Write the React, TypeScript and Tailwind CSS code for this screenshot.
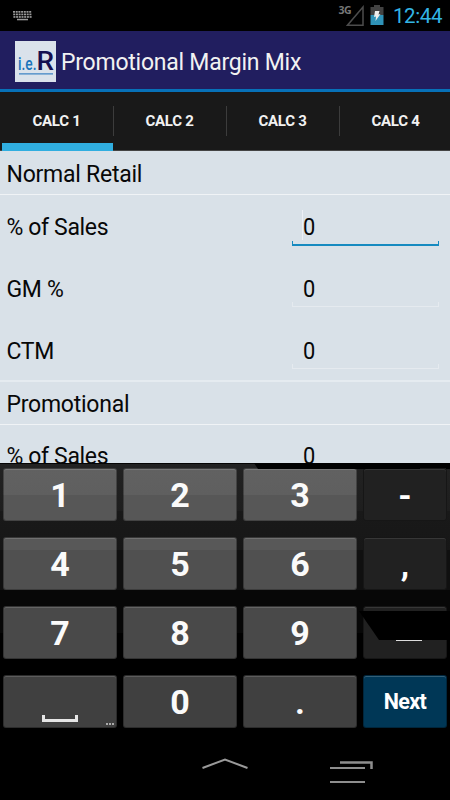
import { clsx } from 'clsx';

const tabs = ['CALC 1', 'CALC 2', 'CALC 3', 'CALC 4'];

const keyRows = [
  { keys: ['1', '2', '3'], side: '-', tone: 'bg-[linear-gradient(#616161_0,#5f5f5f_26px,#575757_26px,#575757_100%)]' },
  { keys: ['4', '5', '6'], side: ',', tone: 'bg-[linear-gradient(#585858_0,#585858_12px,#505050_12px,#505050_100%)]' },
  { keys: ['7', '8', '9'], side: '_', tone: 'bg-[#494949]' },
  { keys: [' ', '0', '.'], side: 'Next', tone: 'bg-[#404040]' },
];

function StatusBar() {
  return (
    <div className="flex h-[31px] items-start bg-black">
      <svg className="ml-[13px] mt-[11px]" width="20" height="10" viewBox="0 0 20 10" fill="#9a9a9a">
        {[0, 3, 6].map((y, r) =>
          [0, 1, 2, 3, 4, 5, 6].map((c) => (
            <rect key={`${y}-${c}`} x={c * 2.7 + r * 0.2} y={y * 0.85} width="2" height="1.7" />
          ))
        )}
        <rect x="4" y="7.8" width="11" height="1.5" />
      </svg>
      <div className="ml-auto mt-[5px] font-['Open_Sans'] text-[10.5px] font-bold leading-[11px] tracking-[-0.6px] text-[#777]">3G</div>
      <svg className="ml-[-5px] mt-[5px]" width="18" height="22" viewBox="0 0 18 22" fill="none">
        <path d="M17 2V20.2H1.5Z" stroke="#4c4c4c" strokeWidth="1.5" />
      </svg>
      <svg className="ml-[6px] mt-[5px]" width="14" height="21" viewBox="0 0 14 21">
        <path d="M4 0H10V2H13.5V10H.5V2H4Z" fill="#424242" />
        <path d="M.5 10H13.5V20H.5Z" fill="#2f93b8" />
        <path d="M5 6H9.5L8.5 9.5L10.5 9L5.5 16L6 11.5L4 12Z" fill="#eee" />
      </svg>
      <div className="ml-[9px] mr-[7px] mt-[4px] w-[50px] whitespace-nowrap text-[20.5px] leading-[24px] tracking-[-0.4px] text-[#33b5e5]">12:44</div>
    </div>
  );
}

function Header() {
  return (
    <div className="flex h-[61px] items-center border-b-[3px] border-[#0771b8] bg-[#211e5f]">
      <div className="ml-[15px] mt-[2px] h-[41px] w-[41px] overflow-hidden bg-[#dae2eb]">
        <svg width="41" height="41" viewBox="0 0 41 41" fontFamily="Roboto, sans-serif">
          <text y="28.5" fontWeight="500">
            <tspan x="3" fontSize="18" fill="#1b75bb" textLength="18.5" lengthAdjust="spacingAndGlyphs">i.e.</tspan>
            <tspan x="21.5" fontSize="25" fill="#151050" textLength="17.5" lengthAdjust="spacingAndGlyphs">R</tspan>
          </text>
          <path d="M4 32.8H38" stroke="#3c83c4" strokeWidth="1.2" />
        </svg>
      </div>
      <h1 className="ml-[5px] mt-[5px] whitespace-nowrap text-[23px] leading-[28px] tracking-[-0.24px] text-[#f2f2f2]">Promotional Margin Mix</h1>
    </div>
  );
}

function Tabs() {
  return (
    <div className="flex h-[59px] border-b border-[#444] bg-[#191919]">
      {tabs.map((tab, i) => (
        <div key={tab} className="relative flex w-[113px] shrink-0 items-center justify-center text-[15px] font-bold tracking-[-0.25px] text-[#f2f2f2]">
          <span className="mt-px">{tab}</span>
          {i < 3 && <span className="absolute right-[-1px] top-[14px] h-[30px] w-px bg-[#3c3c3c]" />}
          {i === 0 && <span className="absolute bottom-[-1px] left-[2px] right-0 h-[8px] bg-[#30aee0]" />}
        </div>
      ))}
    </div>
  );
}

function Section({ title }: { title: string }) {
  return (
    <div className="flex h-[44px] items-center border-b border-[#f0f3f6] pl-[6.5px] pt-[6px] text-[23px] tracking-[-0.25px]">{title}</div>
  );
}

function Field({ label, focused }: { label: string; focused?: boolean }) {
  return (
    <div className="flex h-[62px] shrink-0 items-center pl-[6.5px] text-[23px] tracking-[-0.35px]">
      <span className="w-[285.5px] pt-[4px]">{label}</span>
      <div className="relative mt-[4px] h-[42px] w-[147px] pl-[11px] pt-[5px] leading-[32px]">
        <span className="inline-block origin-left scale-x-95">0</span>
        {focused && <span className="absolute left-[10px] top-[3px] h-[30px] w-px bg-[#edf0f6]" />}
        <span
          className={clsx(
            'absolute left-0 right-0 h-[5px] border-x',
            focused ? 'bottom-[3px] border-b-2 border-[#168ac0]' : 'bottom-[4px] border-b border-[#e5eaef]'
          )}
        />
      </div>
    </div>
  );
}

function Key({ value, tone }: { value: string; tone: string }) {
  return (
    <div
      className={clsx(
        'relative flex items-center justify-center rounded-[3px] border border-black/30 pt-px text-[34px] font-bold leading-none text-[#fafafa] shadow-[inset_0_1px_0_rgba(255,255,255,0.15)]',
        tone
      )}
    >
      {value === ' ' ? (
        <>
          <span className="absolute bottom-[5px] left-[38px] h-[7px] w-[36px] border-x-[3px] border-b-[3px] border-[#e6e6e6]" />
          <span className="absolute bottom-[2px] right-[2px] flex gap-px">
            <i className="h-[2px] w-[2px] bg-[#aaa]" />
            <i className="h-[2px] w-[2px] bg-[#aaa]" />
            <i className="h-[2px] w-[2px] bg-[#aaa]" />
          </span>
        </>
      ) : (
        <span>{value}</span>
      )}
    </div>
  );
}

function SideKey({ value }: { value: string }) {
  if (value === 'Next') {
    return (
      <div className="flex items-center justify-center rounded-[3px] border border-black/30 bg-[#003756] pt-px text-[21.5px] font-bold tracking-[-0.6px] text-white shadow-[inset_0_1px_0_rgba(255,255,255,0.2)]">
        Next
      </div>
    );
  }
  return (
    <div className="relative flex items-center justify-center rounded-[3px] border border-[#161616] bg-[#212121] pt-px text-[34px] font-bold leading-none text-white shadow-[inset_0_1px_0_rgba(255,255,255,0.1)]">
      {value === '_' ? (
        <>
          <span className="absolute left-[32px] top-[33px] h-px w-[26px] bg-[#ddd]" />
          <svg className="absolute left-[-5px] top-[4px]" width="92" height="29" viewBox="0 0 92 29">
            <path d="M0 0H92V29H20Z" fill="#000" />
          </svg>
        </>
      ) : (
        <span>{value}</span>
      )}
    </div>
  );
}

function Keyboard() {
  return (
    <div className="relative h-[272px] bg-[linear-gradient(#222_0,#1e1e1e_48px,#191919_48px,#171717_87px,#101010_87px,#101010_127px,#070707_127px,#070707_170px,#000_170px)] pl-[3px] pt-[5px]">
      <div className="grid grid-cols-[114px_114px_114px_84px] grid-rows-[53px_53px_53px_53px] gap-x-[6px] gap-y-[16px]">
        {keyRows.map((row) => [
          ...row.keys.map((k) => <Key key={k} value={k} tone={row.tone} />),
          <SideKey key={row.side} value={row.side} />,
        ])}
      </div>
      <svg className="absolute left-0 top-0" width="450" height="7" viewBox="0 0 450 7">
        <path d="M0 0H450V1H0Z" fill="#050505" />
        <path d="M254 0H450V6H446V5H420V6H258Z" fill="#000" />
      </svg>
    </div>
  );
}

function NavBar() {
  return (
    <div className="flex h-[65px] items-start bg-black">
      <svg className="ml-[200px] mt-[20px]" width="50" height="16" viewBox="0 0 50 16" fill="none">
        <path d="M2.5 13L25 4.5L47.5 13" stroke="#9a9a9a" strokeWidth="2" />
      </svg>
      <svg className="ml-[79px] mt-[23px]" width="46" height="26" viewBox="0 0 46 26" fill="none" stroke="#8e8e8e">
        <path d="M11 4.5H42.5V11" strokeWidth="2.5" />
        <path d="M1 10H36" strokeWidth="1.8" />
        <path d="M1 24H36" strokeWidth="1.8" />
      </svg>
    </div>
  );
}

export default function App() {
  return (
    <div className="flex h-[800px] w-[450px] flex-col overflow-hidden bg-black font-[Roboto,sans-serif]">
      <StatusBar />
      <Header />
      <Tabs />
      <div className="h-[312px] overflow-hidden bg-[#d9e1e8] text-[#080808]">
        <Section title="Normal Retail" />
        <Field label="% of Sales" focused />
        <Field label="GM %" />
        <Field label="CTM" />
        <div className="-mt-px border-t-2 border-[#e5ebf0]">
          <div className="-mt-px">
            <Section title="Promotional" />
          </div>
        </div>
        <div className="-mt-px">
          <Field label="% of Sales" />
        </div>
      </div>
      <Keyboard />
      <NavBar />
    </div>
  );
}
